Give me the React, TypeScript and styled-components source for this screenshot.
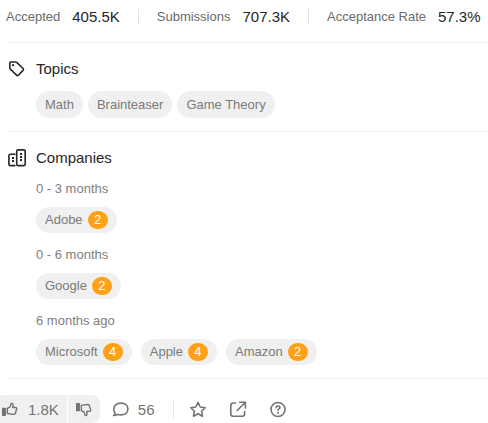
import React from "react";
import styled, { createGlobalStyle } from "styled-components";

const GlobalStyle = createGlobalStyle`
  * { box-sizing: border-box; }
  body {
    margin: 0;
    background: #fff;
    color: #262626;
    font-family: "Liberation Sans", Arial, sans-serif;
    overflow-x: hidden;
  }
  button { font: inherit; color: inherit; border: 0; background: none; padding: 0; cursor: pointer; }
  a { color: inherit; text-decoration: none; }
`;

const Stats = styled.div`
  display: flex;
  align-items: center;
  height: 42px;
  padding: 0 0 9px 6px;
  white-space: nowrap;
`;

const Stat = styled.div`
  display: flex;
  align-items: center;
  gap: 12px;
  font-size: 13px;
  line-height: 20px;
  color: #6b6b6b;

  & + & {
    margin-left: 18px;
  }
  & + &::before {
    content: "";
    width: 1px;
    height: 15px;
    margin-right: 6px;
    background: #e2e2e2;
  }
`;

const StatValue = styled.span`
  font-size: 15px;
  color: #262626;
`;

const Section = styled.section<{ $gap: number }>`
  display: flex;
  flex-direction: column;
  gap: ${(p) => p.$gap}px;
  margin-left: 6px;
  padding: 16px 0 13px 30px;
  border-top: 1px solid #f0f0f0;
`;

const Heading = styled.h2`
  display: flex;
  align-items: center;
  gap: 10px;
  margin: 0 0 0 -28px;
  font-size: 15px;
  font-weight: 400;
  line-height: 20px;
`;

const Chips = styled.div<{ $gap: number }>`
  display: flex;
  flex-wrap: wrap;
  gap: ${(p) => p.$gap}px;
`;

const Chip = styled.a<{ $height: number }>`
  display: flex;
  align-items: center;
  gap: 5px;
  height: ${(p) => p.$height}px;
  padding: 0 9px;
  border-radius: 14px;
  background: #f0f0f0;
  color: #7a7a7a;
  font-size: 13px;
`;

const Count = styled.span`
  min-width: 20px;
  height: 18px;
  border-radius: 9px;
  background: #ffa116;
  color: #fff;
  line-height: 18px;
  text-align: center;
`;

const Periods = styled.div`
  display: flex;
  flex-direction: column;
  gap: 12px;
`;

const Period = styled.div`
  display: flex;
  flex-direction: column;
  gap: 8px;
  color: #808080;
  font-size: 13px;
  line-height: 20px;
`;

const Footer = styled.footer`
  display: flex;
  align-items: center;
  margin-left: 6px;
  padding-top: 16px;
  border-top: 1px solid #f0f0f0;
  color: #737373;
  font-size: 15px;
`;

const Votes = styled.div`
  display: flex;
  gap: 1px;
  margin-left: -12px;
  border-radius: 8px;
  overflow: hidden;
`;

const VoteButton = styled.button`
  display: flex;
  align-items: center;
  gap: 10px;
  height: 28px;
  && { padding: 0 8px; background: #f0f0f0; }
`;

const FooterButton = styled.button`
  display: flex;
  align-items: center;
  gap: 9px;
  height: 28px;
  && { padding: 0 11px; }
`;

const FooterDivider = styled.span`
  width: 1px;
  height: 18px;
  margin: 0 4px 0 7px;
  background: #e5e5e5;
`;

const Icon = styled.svg.attrs({
  viewBox: "0 0 18 18",
  fill: "none",
  stroke: "currentColor",
  strokeWidth: 1.6,
  strokeLinejoin: "round",
  strokeLinecap: "round",
  "aria-hidden": true,
})<{ $size?: number }>`
  width: ${(p) => p.$size ?? 18}px;
  height: ${(p) => p.$size ?? 18}px;
  flex: none;
`;

const TagIcon = () => (
  <Icon>
    <path d="M2.8 2h4.8c.4 0 .8.2 1.1.4l6.4 6.1c.5.5.5 1.1.1 1.6l-4.8 5.2c-.5.5-1.1.5-1.6 0L2.3 9.1c-.3-.3-.5-.7-.5-1.1V3c0-.6.4-1 1-1Z" />
    <circle cx="5" cy="5.2" r="1.1" fill="currentColor" stroke="none" />
  </Icon>
);

const BuildingsIcon = () => (
  <Icon>
    <path d="M6.9 5.3H2.6c-1 0-1.7.7-1.7 1.7v7.9c0 1 .7 1.7 1.7 1.7h4.3M10.4.9h5.1c1 0 1.7.7 1.7 1.7v12.3c0 1-.7 1.7-1.7 1.7h-5.1c-1 0-1.7-.7-1.7-1.7V2.6c0-1 .7-1.7 1.7-1.7Z" />
    <g fill="currentColor" stroke="none">
      <rect x="12" y="4" width="2" height="2" />
      <rect x="12" y="7" width="2" height="2" />
      <rect x="12" y="10" width="2" height="2" />
      <rect x="4" y="8" width="2" height="2" />
      <rect x="4" y="11" width="2" height="2" />
    </g>
  </Icon>
);

const Thumb = () => (
  <>
    <rect x="0" y="7.6" width="4.4" height="9.2" rx=".5" fill="currentColor" stroke="none" />
    <path d="M6 8.2l2.2-1.1c.7-.4 1.1-1 1.3-1.8l.4-1.7c.2-.8.8-1.1 1.4-.9 1 .3 1.4 1.2 1.2 2.2l-.5 2.4h3.3c1 0 1.5.8 1.2 1.7l-1.5 4.8c-.3.9-1 1.3-1.9 1.2L6 14.1Z" />
  </>
);

const ThumbUpIcon = () => <Icon $size={16}><Thumb /></Icon>;
const ThumbDownIcon = () => (
  <Icon $size={16}><g transform="matrix(1 0 0 -1 0 19)"><Thumb /></g></Icon>
);

const CommentIcon = () => (
  <Icon>
    <path d="M9.9 3.1c4 0 7 2.4 7 5.9s-3 5.9-7 5.9c-1.2 0-2.3-.2-3.2-.6-1.1.8-2.4 1.2-4.1 1.2.8-.8 1.3-1.7 1.5-2.6-.8-1-1.3-2.4-1.3-3.9 0-3.5 3.1-5.9 7.1-5.9Z" />
  </Icon>
);

const StarIcon = () => (
  <Icon>
    <path d="M9 2.4l2.2 4.6 5 .7-3.6 3.5.9 5L9 13.8l-4.5 2.4.9-5-3.6-3.5 5-.7Z" />
  </Icon>
);

const ShareIcon = () => (
  <Icon>
    <path d="M6.4 3H4a2.2 2.2 0 0 0-2.2 2.2v8.9A2.2 2.2 0 0 0 4 16.3h9.4a2.2 2.2 0 0 0 2.2-2.2v-2.5M10.7 2.3h5.7V8M16.2 2.5 8.2 10.5" />
  </Icon>
);

const HelpIcon = () => (
  <Icon>
    <circle cx="9" cy="9.5" r="7" />
    <path d="M7.1 7.7c.1-1.1.9-1.7 1.9-1.7 1.1 0 1.9.7 1.9 1.6 0 1.3-1.8 1.4-1.8 2.6" />
    <circle cx="9" cy="12.8" r="1" fill="currentColor" stroke="none" />
  </Icon>
);

const stats = [
  ["Accepted", "405.5K"],
  ["Submissions", "707.3K"],
  ["Acceptance Rate", "57.3%"],
];

const topics = ["Math", "Brainteaser", "Game Theory"];

const periods: { label: string; companies: [string, number][] }[] = [
  { label: "0 - 3 months", companies: [["Adobe", 2]] },
  { label: "0 - 6 months", companies: [["Google", 2]] },
  { label: "6 months ago", companies: [["Microsoft", 4], ["Apple", 4], ["Amazon", 2]] },
];

export default function App() {
  return (
    <main>
      <GlobalStyle />
      <Stats>
        {stats.map(([label, value]) => (
          <Stat key={label}>
            <span>{label}</span>
            <StatValue>{value}</StatValue>
          </Stat>
        ))}
      </Stats>
      <Section $gap={12}>
        <Heading><TagIcon />Topics</Heading>
        <Chips $gap={5}>
          {topics.map((topic) => (
            <Chip key={topic} href="#" $height={27}>{topic}</Chip>
          ))}
        </Chips>
      </Section>
      <Section $gap={11}>
        <Heading><BuildingsIcon />Companies</Heading>
        <Periods>
          {periods.map(({ label, companies }) => (
            <Period key={label}>
              <span>{label}</span>
              <Chips $gap={9}>
                {companies.map(([name, count]) => (
                  <Chip key={name} href="#" $height={26}>
                    {name}
                    <Count>{count}</Count>
                  </Chip>
                ))}
              </Chips>
            </Period>
          ))}
        </Periods>
      </Section>
      <Footer>
        <Votes>
          <VoteButton><ThumbUpIcon />1.8K</VoteButton>
          <VoteButton aria-label="Dislike"><ThumbDownIcon /></VoteButton>
        </Votes>
        <FooterButton><CommentIcon />56</FooterButton>
        <FooterDivider />
        <FooterButton aria-label="Favorite"><StarIcon /></FooterButton>
        <FooterButton aria-label="Share"><ShareIcon /></FooterButton>
        <FooterButton aria-label="Help"><HelpIcon /></FooterButton>
      </Footer>
    </main>
  );
}
